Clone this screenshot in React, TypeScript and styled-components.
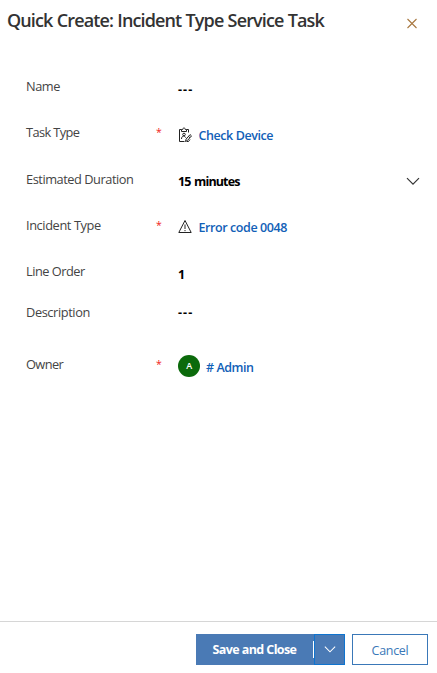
import React from 'react';
import styled, { createGlobalStyle } from 'styled-components';

const GlobalStyle = createGlobalStyle`
  * { box-sizing: border-box; }
  body { margin: 0; background: #fff; font-family: "Open Sans", "Noto Sans", sans-serif; }
`;

const Panel = styled.main`
  width: 437px;
  height: 673px;
  display: flex;
  flex-direction: column;
  overflow: hidden;
`;

const Header = styled.header`
  height: 67px;
  padding: 8px 19px 0 7px;
  display: flex;
  justify-content: space-between;
  align-items: flex-start;
`;

const Title = styled.h1`
  margin: 0;
  font-size: 18px;
  line-height: 24px;
  font-weight: 600;
  letter-spacing: -0.87px;
  word-spacing: 0.4px;
  color: #333;
  white-space: nowrap;
`;

const IconButton = styled.button<{ $top?: number }>`
  margin: ${p => p.$top ?? 0}px 0 0;
  padding: 0;
  border: 0;
  background: none;
  display: flex;
`;

const Form = styled.section`
  flex: 1;
  padding: 0 17px 0 26px;
`;

const Row = styled.div<{ $height: number }>`
  height: ${p => p.$height}px;
  display: grid;
  grid-template-columns: 130px 22px 1fr;
  align-items: start;
`;

const Label = styled.label<{ $spacing: number }>`
  line-height: 38px;
  font-size: 12.8px;
  letter-spacing: ${p => p.$spacing}px;
  color: #444;
  white-space: nowrap;
`;

const Required = styled.span`
  line-height: 38px;
  font-size: 10.5px;
  color: #f02020;
`;

const Value = styled.div<{ $drop: number; $spacing: number; $link?: boolean }>`
  height: 40px;
  margin-top: ${p => p.$drop}px;
  display: flex;
  align-items: center;
  font-size: 12.5px;
  font-weight: ${p => (p.$link ? 600 : 700)};
  letter-spacing: ${p => p.$spacing}px;
  word-spacing: ${p => (p.$link ? 0 : 1)}px;
  color: ${p => (p.$link ? '#1160b7' : '#000')};
  white-space: nowrap;
  > svg { flex: none; margin-right: 6.5px; }
  > button { margin-left: auto; }
`;

const Avatar = styled.span`
  width: 22px;
  height: 22px;
  margin: -2px 6px 0 0;
  border-radius: 50%;
  background: #0b6a0b;
  color: #fff;
  font-size: 9px;
  line-height: 22px;
  text-align: center;
`;

const Footer = styled.footer`
  height: 52px;
  padding: 12px 9px 0 0;
  border-top: 1px solid #d6d6d6;
  display: flex;
  justify-content: flex-end;
`;

const SaveButton = styled.button`
  width: 117px;
  height: 31px;
  padding: 0;
  border: 0;
  background: #4a7ab5;
  color: #fff;
  font: 700 12.5px "Open Sans", sans-serif;
  letter-spacing: -0.6px;
`;

const Divider = styled.span`
  width: 1px;
  height: 31px;
  border: solid #4a7ab5;
  border-width: 7px 0;
  background: #fff;
`;

const MenuButton = styled.button`
  width: 31px;
  height: 31px;
  padding: 0 0 2px;
  border: 1px solid #0f74cf;
  background: #4a7ab5;
  display: flex;
  align-items: center;
  justify-content: center;
`;

const CancelButton = styled.button`
  width: 76px;
  height: 31px;
  margin-left: 7px;
  padding: 2px 0 0;
  border: 1px solid #3a78b8;
  background: #fff;
  color: #3a78b8;
  font: 400 12.5px "Open Sans", sans-serif;
  letter-spacing: -0.3px;
`;

const CloseIcon = () => (
  <svg width="12" height="12" viewBox="0 0 12 12" fill="none" stroke="#a87840" strokeWidth="1.1">
    <path d="M1.5 2l9 9M10.5 2l-9 9" />
  </svg>
);

const Chevron = ({ color, size }: { color: string; size: number }) => (
  <svg width={size} height={size} viewBox="0 0 14 14" fill="none" stroke={color} strokeWidth="1.2">
    <path d="M1 4.2l6 6 6-6" />
  </svg>
);

const ClipboardIcon = () => (
  <svg width="14" height="16" viewBox="0 0 14 16" fill="none" stroke="#222" strokeWidth="1">
    <path d="M3.5 2.5h-2v12h5M8.5 2.5h2v3M3.5 4.5v-2h1.2c0-2 2.6-2 2.6 0h1.2v2z" />
    <circle cx="6" cy="7.5" r="1.3" />
    <path d="M3.5 12c0-3.6 3.5-3.6 4.2-1.3M7.5 14.5l.6-2.4 4-4.5 1.4 1.3-4 4.5zM10.5 9.4l1.5 1.4M8.8 14.5h1.7l1.5-2" />
  </svg>
);

const WarningIcon = () => (
  <svg width="14" height="14" viewBox="0 0 14 14" fill="none" stroke="#222" strokeWidth="1">
    <path d="M7 .5L13.2 12.5H.8zM7 4.5V9M7 10v1.2" />
  </svg>
);

interface Field {
  label: string;
  labelSpacing: number;
  height: number;
  drop: number;
  value: string;
  valueSpacing: number;
  required?: boolean;
  link?: boolean;
  icon?: React.ReactNode;
  select?: boolean;
}

const fields: Field[] = [
  { label: 'Name', labelSpacing: -0.45, height: 46, drop: 2, value: '---', valueSpacing: 1.1 },
  { label: 'Task Type', labelSpacing: -0.6, height: 47, drop: 2, value: 'Check Device', valueSpacing: -0.42, required: true, link: true, icon: <ClipboardIcon /> },
  { label: 'Estimated Duration', labelSpacing: -0.46, height: 46, drop: 1, value: '15 minutes', valueSpacing: -0.85, select: true },
  { label: 'Incident Type', labelSpacing: -0.4, height: 46, drop: 1, value: 'Error code 0048', valueSpacing: -0.42, required: true, link: true, icon: <WarningIcon /> },
  { label: 'Line Order', labelSpacing: -0.5, height: 41, drop: 2, value: '1', valueSpacing: 0 },
  { label: 'Description', labelSpacing: -0.4, height: 52, drop: -1, value: '---', valueSpacing: 1.1 },
  { label: 'Owner', labelSpacing: -0.6, height: 46, drop: 2, value: '# Admin', valueSpacing: -0.45, required: true, link: true, icon: <Avatar>A</Avatar> },
];

export default function App() {
  return (
    <Panel>
      <GlobalStyle />
      <Header>
        <Title>Quick Create: Incident Type Service Task</Title>
        <IconButton $top={9} aria-label="Close"><CloseIcon /></IconButton>
      </Header>
      <Form>
        {fields.map(f => (
          <Row key={f.label} $height={f.height}>
            <Label $spacing={f.labelSpacing}>{f.label}</Label>
            <Required>{f.required ? '*' : ''}</Required>
            <Value $drop={f.drop} $spacing={f.valueSpacing} $link={f.link}>
              {f.icon}
              <span>{f.value}</span>
              {f.select && <IconButton aria-label="Show options"><Chevron color="#333" size={14} /></IconButton>}
            </Value>
          </Row>
        ))}
      </Form>
      <Footer>
        <SaveButton>Save and Close</SaveButton>
        <Divider />
        <MenuButton aria-label="More save options"><Chevron color="#fff" size={12} /></MenuButton>
        <CancelButton>Cancel</CancelButton>
      </Footer>
    </Panel>
  );
}
